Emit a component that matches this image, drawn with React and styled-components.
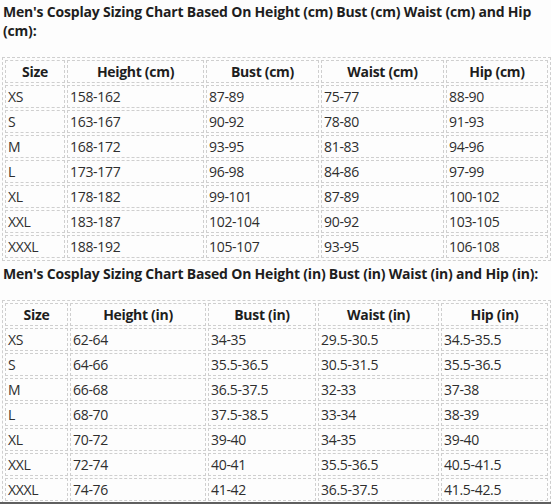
import React from "react";
import styled, { createGlobalStyle } from "styled-components";

const Global = createGlobalStyle`
  html, body { margin: 0; padding: 0; background: #fdfdfd; }
  body { font-family: "Open Sans", "Liberation Sans", sans-serif; color: #333; }
`;

const Frame = styled.div`
  box-sizing: border-box;
  width: 551px;
  height: 504px;
  overflow: hidden;
  padding: 2px 0 0 2px;
  border-bottom: 2px solid #5f5f5f;
`;

const Heading = styled.p`
  margin: ${(p) => (p.$first ? "0" : "3px")} 0 17px 1px;
  font-size: 14px;
  line-height: 19px;
  font-weight: 700;
  letter-spacing: -0.2px;
  color: #1e1e1e;
`;

const Table = styled.table`
  width: 549px;
  table-layout: fixed;
  border: 1px dashed #cfcfcf;
  border-spacing: 2px;
  font-size: 14px;
  letter-spacing: -0.3px;
`;

const Th = styled.th`
  border: 1px dashed #cfcfcf;
  padding: 1px 2px;
  line-height: 19px;
  font-weight: 700;
  text-align: center;
  color: #1e1e1e;
`;

const Td = styled.td`
  border: 1px dashed #cfcfcf;
  padding: 1px 2px;
  line-height: 19px;
  text-align: left;
  color: #2e2e2e;
  white-space: nowrap;
`;

const cmRows = [
  ["XS", "158-162", "87-89", "75-77", "88-90"],
  ["S", "163-167", "90-92", "78-80", "91-93"],
  ["M", "168-172", "93-95", "81-83", "94-96"],
  ["L", "173-177", "96-98", "84-86", "97-99"],
  ["XL", "178-182", "99-101", "87-89", "100-102"],
  ["XXL", "183-187", "102-104", "90-92", "103-105"],
  ["XXXL", "188-192", "105-107", "93-95", "106-108"],
];

const inRows = [
  ["XS", "62-64", "34-35", "29.5-30.5", "34.5-35.5"],
  ["S", "64-66", "35.5-36.5", "30.5-31.5", "35.5-36.5"],
  ["M", "66-68", "36.5-37.5", "32-33", "37-38"],
  ["L", "68-70", "37.5-38.5", "33-34", "38-39"],
  ["XL", "70-72", "39-40", "34-35", "39-40"],
  ["XXL", "72-74", "40-41", "35.5-36.5", "40.5-41.5"],
  ["XXXL", "74-76", "41-42", "36.5-37.5", "41.5-42.5"],
];

function SizeTable({ unit, widths, rows }) {
  const heads = ["Size", `Height (${unit})`, `Bust (${unit})`, `Waist (${unit})`, `Hip (${unit})`];
  return (
    <Table>
      <colgroup>
        {widths.map((w, i) => (
          <col key={i} style={{ width: w }} />
        ))}
      </colgroup>
      <thead>
        <tr>
          {heads.map((h) => (
            <Th key={h}>{h}</Th>
          ))}
        </tr>
      </thead>
      <tbody>
        {rows.map((r) => (
          <tr key={r[0]}>
            {r.map((c, i) => (
              <Td key={i}>{c}</Td>
            ))}
          </tr>
        ))}
      </tbody>
    </Table>
  );
}

export default function App() {
  return (
    <>
      <Global />
      <Frame>
        <Heading $first>
          Men's Cosplay Sizing Chart Based On Height (cm) Bust (cm) Waist (cm) and Hip (cm):
        </Heading>
        <SizeTable unit="cm" widths={[60, 137, 113, 123, 102]} rows={cmRows} />
        <Heading>
          Men's Cosplay Sizing Chart Based On Height (in) Bust (in) Waist (in) and Hip (in):
        </Heading>
        <SizeTable unit="in" widths={[63, 136, 108, 121, 107]} rows={inRows} />
      </Frame>
    </>
  );
}
